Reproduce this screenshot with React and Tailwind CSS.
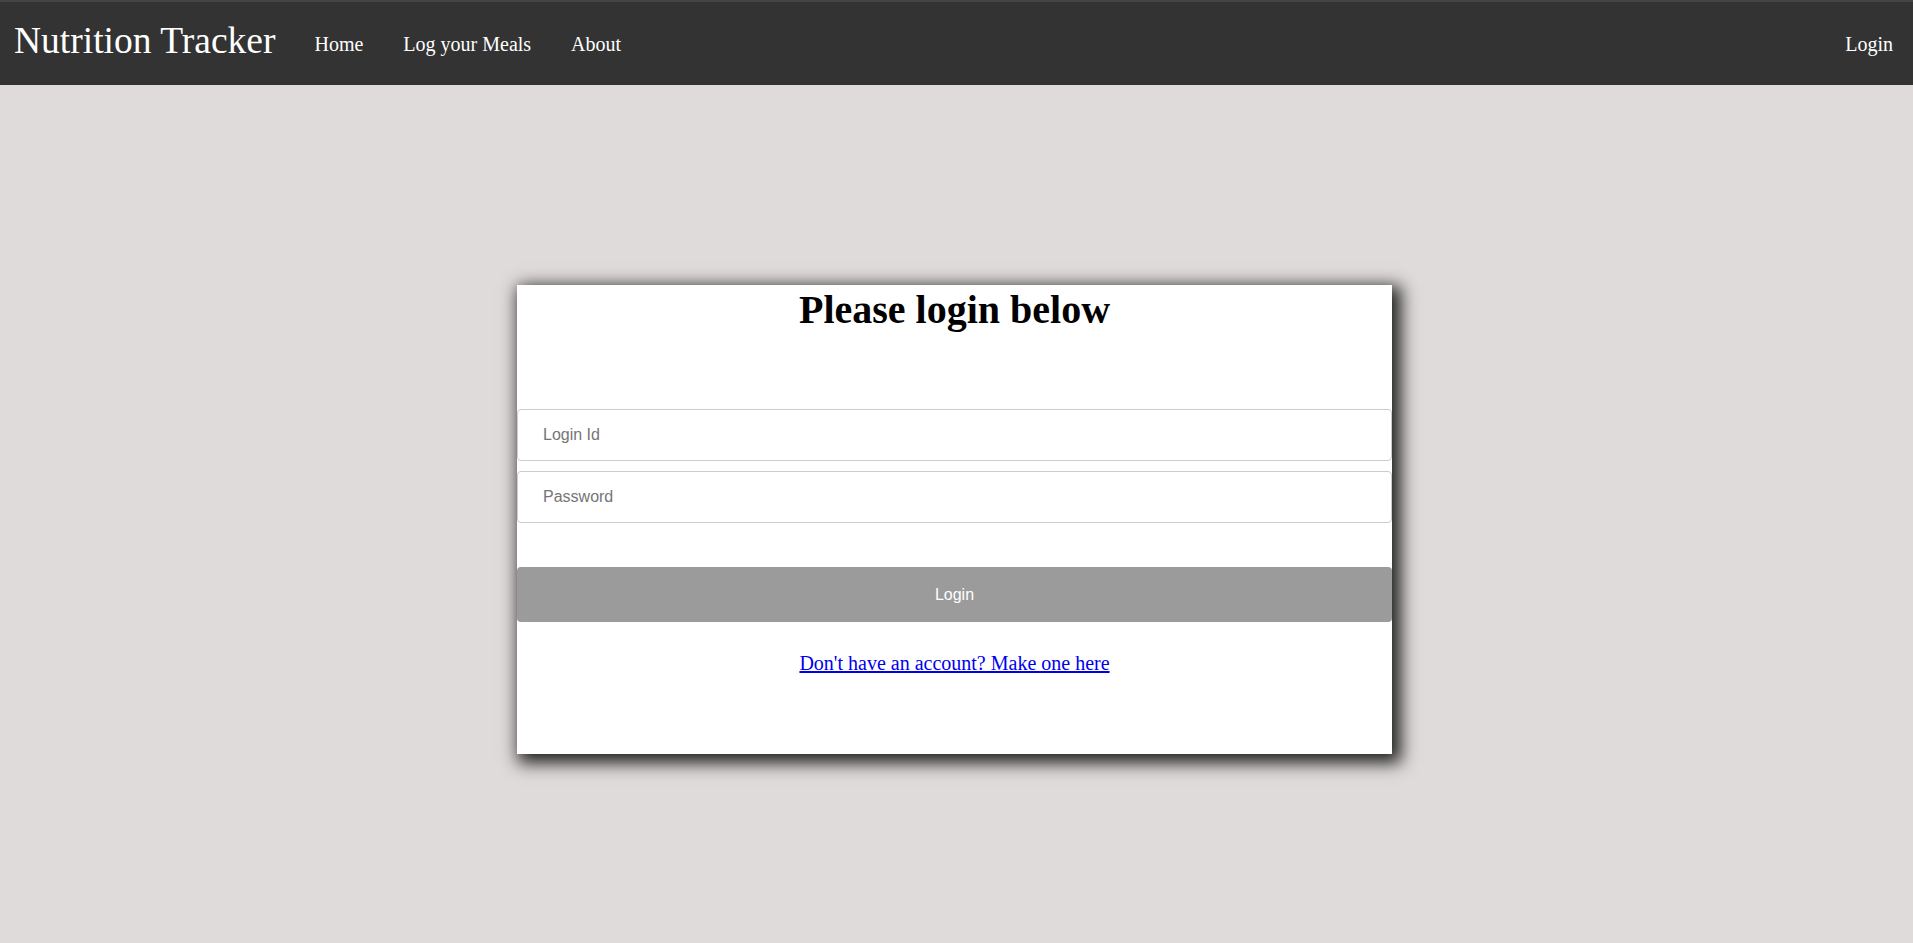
import React from 'react';

const serif = { fontFamily: '"Liberation Serif", "Times New Roman", serif' };

const Navbar = () => {
  return (
    <nav className="flex h-[85px] items-center border-t-2 border-[#444] bg-[#333] px-[14px] text-white" style={serif}>
      <div className="mb-1 text-[37.5px] leading-normal">Nutrition Tracker</div>
      <ul className="ml-[19px] flex items-center text-[20px] leading-normal">
        <li className="px-[20px]"><a href="#">Home</a></li>
        <li className="px-[20px]"><a href="#">Log your Meals</a></li>
        <li className="px-[20px]"><a href="#">About</a></li>
      </ul>
      <div className="ml-auto pr-[6px] text-[20px] leading-normal">
        <a href="#">Login</a>
      </div>
    </nav>
  );
};

const LoginCard = () => {
  return (
    <div className="flex h-[469px] w-[875px] flex-col bg-white shadow-[5px_5px_16px_4px_rgba(0,0,0,0.85)]">
      <h1 className="mt-[2px] text-center text-[40px] font-bold leading-[46px] text-black" style={serif}>
        Please login below
      </h1>
      <input
        type="text"
        placeholder="Login Id"
        className="mt-[76px] h-[52px] w-full rounded-[4px] border border-[#ccc] bg-white pl-[25px] text-[16px] text-black outline-none placeholder:text-[#757575]"
        style={{ fontFamily: '"Liberation Sans", Arial, sans-serif' }}
      />
      <input
        type="password"
        placeholder="Password"
        className="mt-[10px] h-[52px] w-full rounded-[4px] border border-[#ccc] bg-white pl-[25px] text-[16px] text-black outline-none placeholder:text-[#757575]"
        style={{ fontFamily: '"Liberation Sans", Arial, sans-serif' }}
      />
      <button
        className="mt-[44px] h-[55px] w-full rounded-[4px] bg-[#9b9b9b] text-[16px] text-white"
        style={{ fontFamily: '"Liberation Sans", Arial, sans-serif' }}
      >
        Login
      </button>
      <div className="mt-[30px] text-center text-[20px] leading-[23px]" style={serif}>
        <a href="#" className="text-[#0000ee] underline">Don't have an account? Make one here</a>
      </div>
    </div>
  );
};

export default function App() {
  return (
    <div className="min-h-screen bg-[#dfdbda]">
      <Navbar />
      <main className="flex justify-center pt-[200px] pr-[4px] pb-[180px]">
        <LoginCard />
      </main>
    </div>
  );
}
